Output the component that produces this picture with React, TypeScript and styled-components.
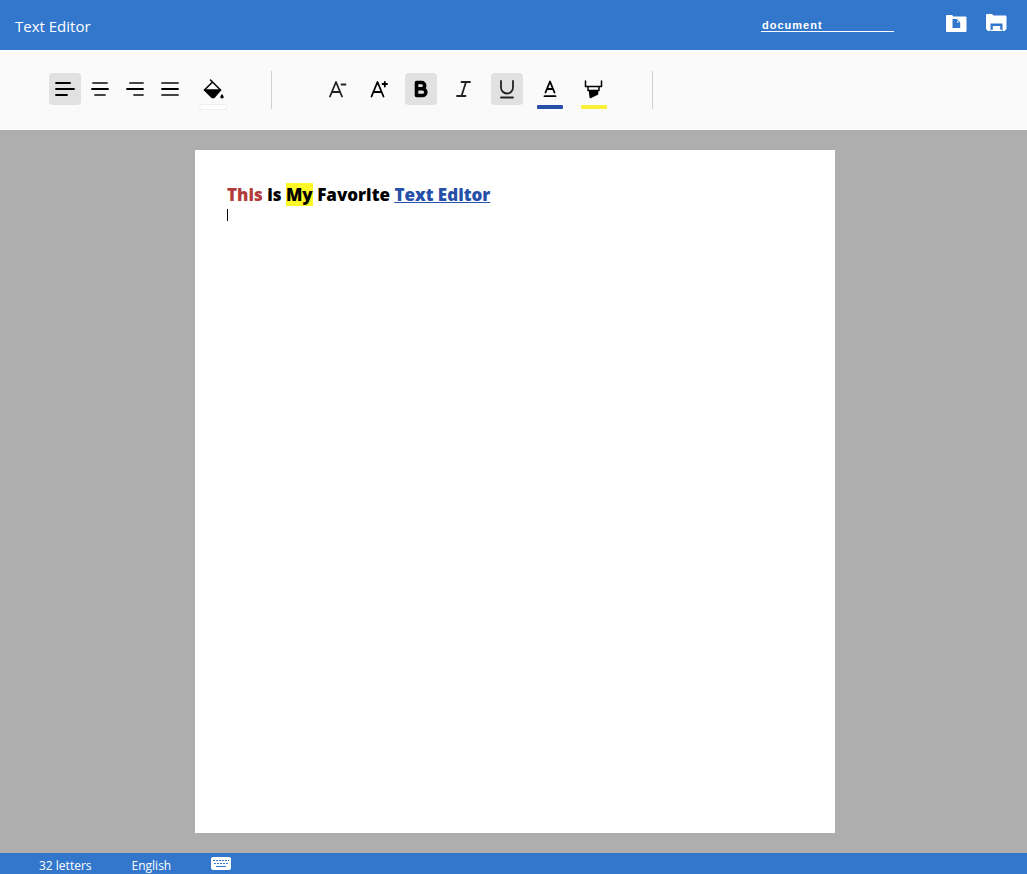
import React from "react";
import styled, { createGlobalStyle, css } from "styled-components";

const GlobalStyle = createGlobalStyle`
  * { box-sizing: border-box; }
  body { margin: 0; }
`;

const Shell = styled.div`
  display: flex;
  flex-direction: column;
  min-height: 100vh;
  background: #aeaeae;
  font-family: "Segoe UI", "Open Sans", "Noto Sans", sans-serif;
`;

const Header = styled.header`
  display: flex;
  align-items: center;
  height: 50px;
  padding: 0 16px 0 15px;
  background: #3377cc;
  color: #fff;
`;

const Title = styled.h1`
  flex: 1;
  margin: 0;
  padding-top: 2px;
  font-size: 15px;
  line-height: 20px;
  font-weight: 400;
`;

const NameInput = styled.input`
  width: 133px;
  height: 14px;
  margin: 0 47px 0 0;
  padding: 0 1px;
  border: 0;
  border-bottom: 1px solid #fff;
  border-radius: 0;
  outline: 0;
  background: transparent;
  color: #fff;
  font: bold 11px "Liberation Sans", Arial, sans-serif;
  letter-spacing: 1px;
`;

const FileActions = styled.div`
  display: flex;
  gap: 10px;
  padding-bottom: 4px;
`;

const FileButton = styled.button`
  display: grid;
  place-items: center;
  width: 30px;
  height: 30px;
  padding: 0;
  border: 0;
  background: transparent;
  color: #fff;
`;

const Toolbar = styled.div`
  display: flex;
  height: 80px;
  padding: 21px 0 0 49px;
  background: #fafafa;
`;

const Section = styled.div`
  display: flex;
  padding-top: 2px;
`;

const ToolRow = styled.div<{ $gap: number; $before?: number }>`
  display: flex;
  gap: ${(p) => p.$gap}px;
  padding-left: ${(p) => p.$before ?? 0}px;
`;

const Divider = styled.div`
  width: 1px;
  height: 38px;
  margin: 0 49px 0 45px;
  background: #cfcfcf;
`;

const ToolButton = styled.button<{ $active?: boolean }>`
  display: grid;
  place-items: center;
  width: 32px;
  height: 32px;
  padding: 0;
  border: 0;
  border-radius: 4px;
  background: transparent;
  color: #000;
  ${(p) => p.$active && css`background: #e1e1e1;`}
`;

const ColorButton = styled.button<{ $color: string }>`
  display: flex;
  flex-direction: column;
  align-items: center;
  width: 26px;
  height: 36px;
  padding: 4px 0 0;
  border: 0;
  background: transparent;
  color: #000;
  &::after {
    content: "";
    width: 26px;
    height: 4px;
    margin-top: 4px;
    border-radius: 1px;
    background: ${(p) => p.$color};
    box-shadow: ${(p) => (p.$color === "#ffffff" ? "0 0 1px #999" : "none")};
  }
`;

const Workspace = styled.main`
  flex: 1;
  display: flex;
  justify-content: center;
  padding: 20px 0 20px 3px;
`;

const Paper = styled.div`
  width: 100%;
  max-width: 640px;
  padding: 32px;
  background: #fff;
  outline: 0;
`;

const Line = styled.p`
  margin: 0;
  font-size: 17px;
  line-height: 26px;
  font-weight: 800;
  color: #000;
`;

const Run = styled.span<{ $color?: string; $mark?: string; $underline?: boolean }>`
  color: ${(p) => p.$color ?? "inherit"};
  background: ${(p) => p.$mark ?? "transparent"};
  text-decoration: ${(p) => (p.$underline ? "underline" : "none")};
`;

const Caret = styled.div`
  width: 1px;
  height: 12px;
  margin-top: 1px;
  background: #000;
`;

const StatusBar = styled.footer`
  display: flex;
  align-items: center;
  gap: 40px;
  height: 21px;
  padding: 0 39px;
  background: #3377cc;
  color: #fff;
`;

const StatusItem = styled.span`
  padding-top: 4px;
  font-size: 12px;
  line-height: 17px;
`;

type IconProps = { width?: number; children: React.ReactNode };
const Icon = ({ width = 2, children }: IconProps) => (
  <svg width="24" height="24" viewBox="0 0 24 24" fill="none" stroke="currentColor" strokeWidth={width} strokeLinecap="round" strokeLinejoin="round" aria-hidden="true">
    {children}
  </svg>
);

const alignments = [
  { label: "Align left", outer: "M3 6H17M3 18H14", middle: "M3 12H21" },
  { label: "Align center", outer: "M5 6H19M7 18H17", middle: "M4 12H20" },
  { label: "Align right", outer: "M7 6H20M11 18H20", middle: "M4 12H20" },
  { label: "Justify", outer: "M4 6H20M4 18H20", middle: "M4 12H20" },
];

export default function App() {
  return (
    <Shell>
      <GlobalStyle />
      <Header>
        <Title>Text Editor</Title>
        <NameInput aria-label="Document name" defaultValue="document" />
        <FileActions>
          <FileButton aria-label="Open document">
            <svg width="22" height="18" viewBox="0 0 22 18" aria-hidden="true">
              <path fill="currentColor" fillRule="evenodd" d="M2 1H7L8.500 2.500H20.500Q21.500 2.500 21.500 3.500V17Q21.500 18 20.500 18H2Q1 18 1 17V2Q1 1 2 1ZM7.500 5V14H15.200V8.500L11.800 5Z" />
              <path fill="currentColor" d="M12 6.500V8.500H14Z" />
            </svg>
          </FileButton>
          <FileButton aria-label="Save document">
            <svg width="22" height="18" viewBox="0 0 22 18" aria-hidden="true">
              <path fill="currentColor" fillRule="evenodd" d="M2 0H7L8.500 1.500H20.500Q21.500 1.500 21.500 2.500V15L19.500 17H17.500V9.500H5.500V17H3L1 15V1Q1 0 2 0Z" />
              <path fill="currentColor" d="M6 17V15.800H7.800V12H15.200V15.800H17V17Z" />
            </svg>
          </FileButton>
        </FileActions>
      </Header>
      <Toolbar role="toolbar" aria-label="Formatting">
        <Section>
          <ToolRow $gap={3}>
            {alignments.map((a, i) => (
              <ToolButton key={a.label} aria-label={a.label} $active={i === 0}>
                <Icon width={1.8}>
                  <path d={a.outer} stroke={i === 0 ? "#000" : "#444"} />
                  <path d={a.middle} />
                </Icon>
              </ToolButton>
            ))}
          </ToolRow>
          <ToolRow $gap={18} $before={14}>
            <ColorButton aria-label="Page color" $color="#ffffff">
              <Icon width={1.5}>
                <path d="M9.500 3L19.500 13M11.500 5L3.500 13" />
                <path d="M3.500 13H19.500L13 20.500H11Z" fill="currentColor" />
                <path d="M21 18L22 20Q21 21.500 20 20Z" fill="currentColor" />
              </Icon>
            </ColorButton>
          </ToolRow>
        </Section>
        <Divider />
        <Section>
          <ToolRow $gap={10}>
            <ToolButton aria-label="Decrease font size">
              <Icon width={1.8}><path stroke="#222" d="M5 19.500L11 5L17 19.500M7.500 15H14.500M16.500 7.500H20.500" /></Icon>
            </ToolButton>
            <ToolButton aria-label="Increase font size">
              <Icon width={1.8}><path d="M4.500 19.500L10.500 5L16.500 19.500M7 15H14M15.500 7H20M17.800 5V9.500" /></Icon>
            </ToolButton>
            <ToolButton aria-label="Bold" $active>
              <Icon width={3.6}><path d="M7.500 5.500H12.500A3 3 0 0 1 12.500 11.800H7.500ZM7.500 11.800H13.500A3.200 3.200 0 0 1 13.500 18.500H7.500Z" /></Icon>
            </ToolButton>
            <ToolButton aria-label="Italic">
              <Icon width={1.8}><path stroke="#222" d="M10.500 5H19M6 19H14.500M15 5L10.500 19" /></Icon>
            </ToolButton>
          </ToolRow>
          <ToolRow $gap={10} $before={12}>
            <ToolButton aria-label="Underline" $active>
              <Icon width={1.8}><path stroke="#222" d="M6 4V10.500A6 6 0 0 0 18 10.500V4M6 20.500H18" /></Icon>
            </ToolButton>
          </ToolRow>
          <ToolRow $gap={18} $before={14}>
            <ColorButton aria-label="Text color" $color="#264fa8">
              <Icon width={1.8}><path d="M7.500 15.500L12 4.500L16.500 15.500M9 12H15M6.500 19.200H17.500" /></Icon>
            </ColorButton>
            <ColorButton aria-label="Highlight color" $color="#faf03a">
              <Icon width={1.5}>
                <path d="M3.500 4V9.500H19.500V4M6 9.500V13.500H17V9.500" />
                <path d="M7.500 14H15.500V17L8.300 20.500Z" fill="currentColor" />
              </Icon>
            </ColorButton>
          </ToolRow>
        </Section>
        <Divider />
      </Toolbar>
      <Workspace>
        <Paper role="textbox" aria-multiline="true" aria-label="Document text" contentEditable suppressContentEditableWarning>
          <Line>
            <Run $color="#b33a3a">This</Run> is <Run $mark="#fdf926">My</Run> Favorite <Run $color="#264fa8" $underline>Text Editor</Run>
          </Line>
          <Caret />
        </Paper>
      </Workspace>
      <StatusBar>
        <StatusItem>32 letters</StatusItem>
        <StatusItem>English</StatusItem>
        <svg width="20" height="13" viewBox="0 0 20 13" aria-hidden="true">
          <rect width="20" height="13" rx="2" fill="#fff" />
          <path d="M2 3.500H18M3 6.500H17" stroke="#3377cc" strokeDasharray="2 1" />
          <path d="M5 9.500H15" stroke="#3377cc" />
        </svg>
      </StatusBar>
    </Shell>
  );
}
